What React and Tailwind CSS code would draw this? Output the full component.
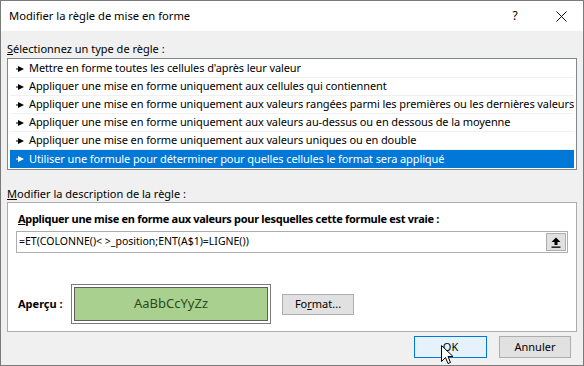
import React from "react";

const items = [
  "Mettre en forme toutes les cellules d'après leur valeur",
  "Appliquer une mise en forme uniquement aux cellules qui contiennent",
  "Appliquer une mise en forme uniquement aux valeurs rangées parmi les premières ou les dernières valeurs",
  "Appliquer une mise en forme uniquement aux valeurs au-dessus ou en dessous de la moyenne",
  "Appliquer une mise en forme uniquement aux valeurs uniques ou en double",
  "Utiliser une formule pour déterminer pour quelles cellules le format sera appliqué",
];

function Arrow({ color }) {
  return (
    <svg width="8" height="6" viewBox="0 0 8 6" className="shrink-0">
      <rect x="0" y="2.5" width="3" height="1" fill={color} />
      <path d="M2 0 L8 3 L2 6 Z" fill={color} />
    </svg>
  );
}

export default function App() {
  return (
    <div
      className="relative w-[584px] h-[366px] border border-[#7a7a7a] flex flex-col text-[11px] text-black overflow-hidden"
      style={{ fontFamily: '"Noto Sans", sans-serif' }}
    >
      {/* Title bar */}
      <div className="h-[30px] bg-white flex items-center pl-[8px] pr-[16px] shrink-0 text-[11.2px]">
        <span className="flex-1">Modifier la règle de mise en forme</span>
        <span className="w-[14px] text-center mr-[34px] text-[12px]">?</span>
        <svg width="11" height="11" viewBox="0 0 11 11">
          <path d="M0.5 0.5 L10.5 10.5 M10.5 0.5 L0.5 10.5" stroke="#111" strokeWidth="1" />
        </svg>
      </div>

      {/* Body */}
      <div className="flex-1 bg-[#f0f0f0] flex flex-col px-[6px] pt-[9px]">
        <div className="h-[17px] leading-[17px]">
          <span className="underline">S</span>électionnez un type de règle :
        </div>
        <div className="mt-[1px] border border-[#828790] bg-white py-[1px] px-[2px]">
          {items.map((t, i) => {
            const sel = i === items.length - 1;
            return (
              <div
                key={i}
                className={
                  "h-[18px] flex items-center gap-[5px] pl-[6px] whitespace-nowrap tracking-[-0.1px] " +
                  (sel ? "bg-[#0078d7] text-white" : "border-b border-[#f0f0f0]")
                }
              >
                <Arrow color={sel ? "#ffffff" : "#000000"} />
                <span>{t}</span>
              </div>
            );
          })}
        </div>

        <div className="mt-[15px] h-[17px] leading-[17px]">
          <span className="underline">M</span>odifier la description de la règle :
        </div>
        <div className="border border-[#adadad] bg-white h-[130px] flex flex-col px-[8px] pt-[7px]">
          <div className="h-[17px] leading-[17px] font-bold pl-[2px] tracking-[-0.3px]">
            <span className="underline">A</span>ppliquer une mise en forme aux valeurs pour lesquelles cette formule est vraie :
          </div>
          <div className="mt-[4px] h-[22px] border border-[#abadb3] flex items-center pl-[2px] pr-[1px]">
            <span className="flex-1 text-[10.5px]">=ET(COLONNE()&lt; &gt;_position;ENT(A$1)=LIGNE())</span>
            <div className="w-[20px] h-[18px] bg-[#e1e1e1] border border-[#adadad] flex items-center justify-center">
              <svg width="10" height="11" viewBox="0 0 10 11">
                <path d="M5 0.5 L9.5 5 L6.5 5 L6.5 8 L3.5 8 L3.5 5 L0.5 5 Z" fill="#000" />
                <rect x="0.5" y="9.5" width="9" height="1.3" fill="#000" />
              </svg>
            </div>
          </div>
          <div className="mt-[31px] flex items-center">
            <span className="font-bold w-[55px] pl-[2px]">Aperçu :</span>
            <div className="w-[200px] h-[40px] border border-[#7a7a7a] bg-white p-[2px]">
              <div className="w-full h-full bg-[#a9d08e] border border-[#5f5f5f] flex items-center justify-center text-[#2d4a1c] text-[13px]">
                AaBbCcYyZz
              </div>
            </div>
            <div className="ml-[11px] w-[72px] h-[21px] bg-[#e1e1e1] border border-[#adadad] flex items-center justify-center">
              <span>Fo<span className="underline">r</span>mat...</span>
            </div>
          </div>
        </div>

        <div className="mt-[4px] flex justify-end gap-[12px] pr-[6px]">
          <div className="w-[73px] h-[22px] bg-[#e5f1fb] border border-[#0078d7] flex items-center justify-center">
            OK
          </div>
          <div className="w-[72px] h-[22px] bg-[#e1e1e1] border border-[#adadad] flex items-center justify-center">
            Annuler
          </div>
        </div>
      </div>

      {/* Mouse cursor */}
      <svg
        className="absolute left-[440px] top-[344px]"
        width="13"
        height="21"
        viewBox="0 0 13 21"
      >
        <path
          d="M0.5 0.5 L0.5 16.5 L4.5 12.5 L7 18.5 L9.5 17.5 L7 11.5 L12 11.5 Z"
          fill="#fff"
          stroke="#000"
          strokeWidth="1"
          strokeLinejoin="miter"
        />
      </svg>
    </div>
  );
}
